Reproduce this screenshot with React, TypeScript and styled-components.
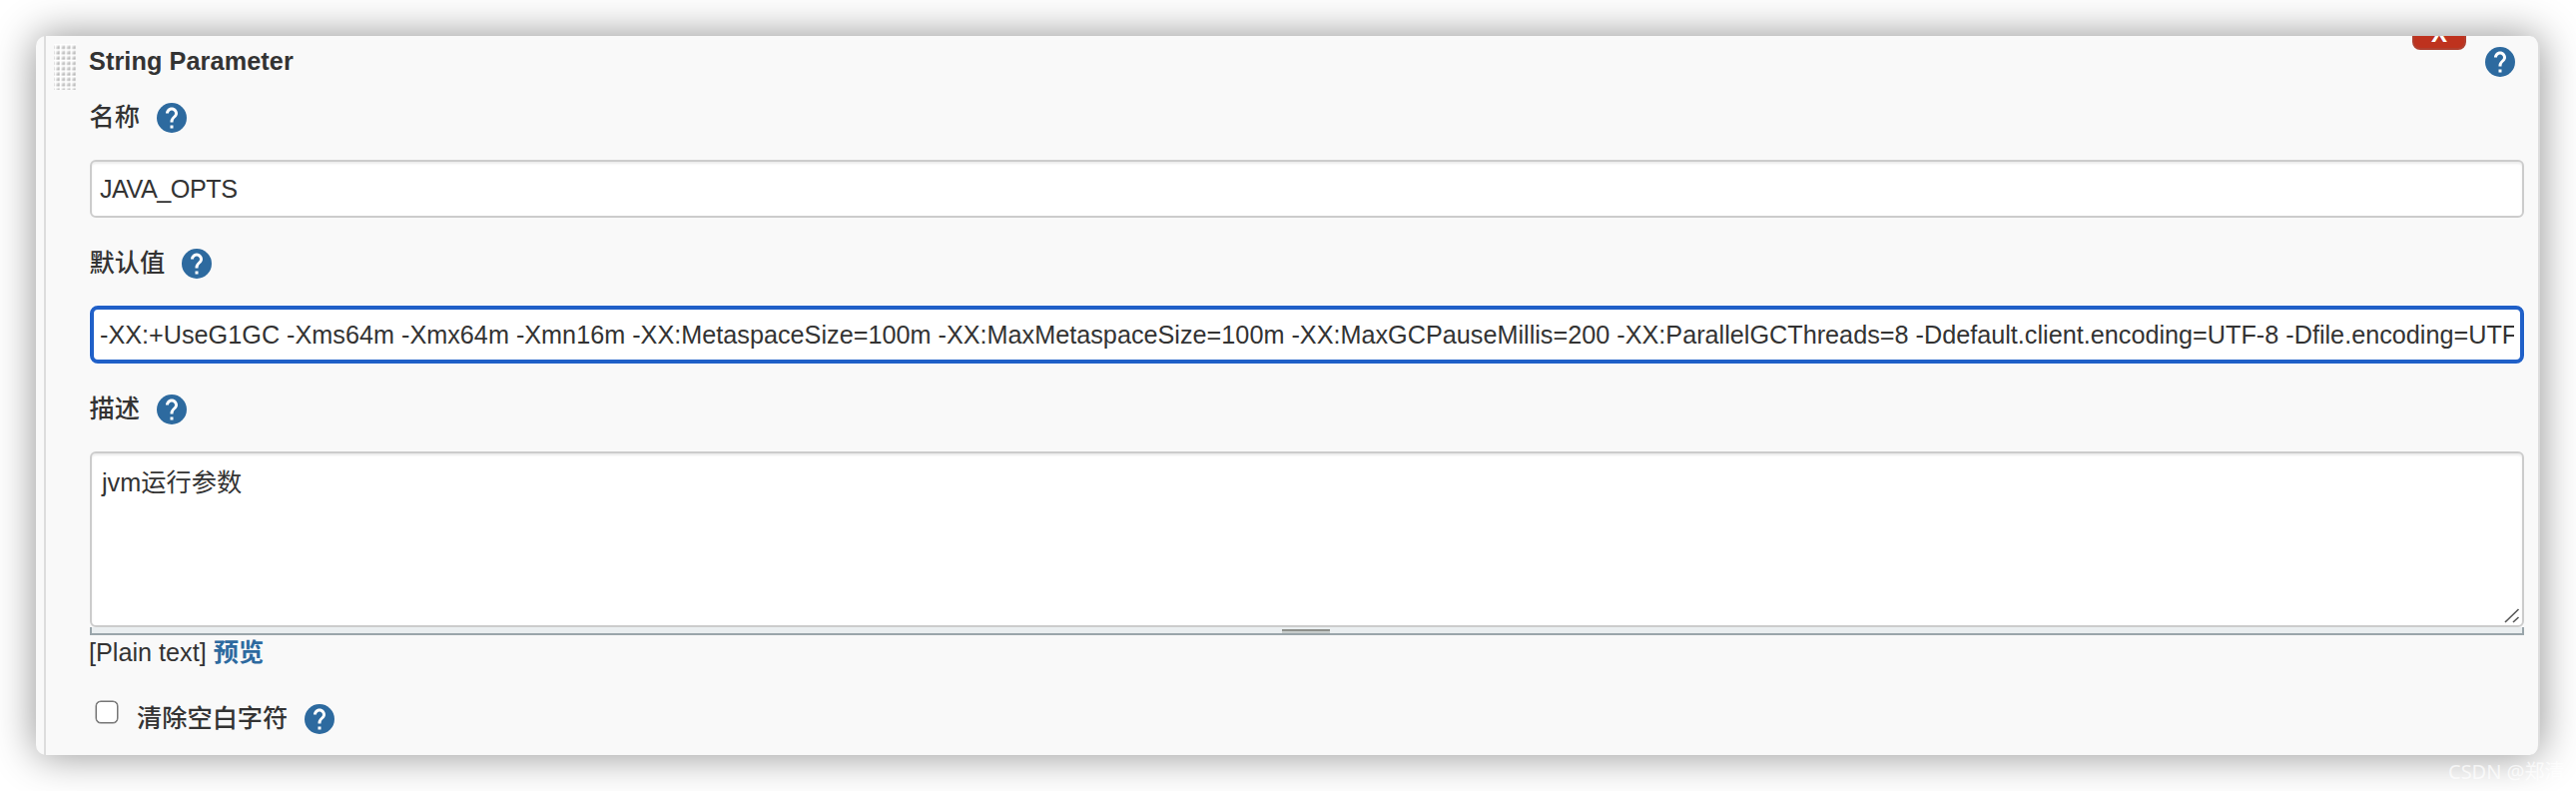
import React from "react";
import styled, { createGlobalStyle } from "styled-components";

const GlobalStyle = createGlobalStyle`
  * { box-sizing: border-box; }
  body {
    margin: 0;
    background: #fff;
    overflow: hidden;
    color: #333;
    font: 25.22px/36px "Liberation Sans", "Noto Sans CJK SC", sans-serif;
  }
`;

const Page = styled.main`
  position: relative;
  height: 792px;
  padding: 36px;
  overflow: hidden;
`;

const Panel = styled.section`
  height: 720px;
  padding-left: 8px;
  background: #f9f9f9;
  border-right: 2px solid #ddd;
  border-radius: 10px;
  box-shadow: 0 0 42px rgba(0, 0, 0, 0.44);
`;

const Body = styled.div`
  position: relative;
  display: flex;
  height: 100%;
  padding: 8px 14px 0 8px;
  border-left: 2px solid #ddd;
  overflow: hidden;
`;

const Grip = styled.svg`
  flex: none;
  width: 22px;
  height: 46px;
  margin-right: 14px;
`;

const Form = styled.div`
  flex: 1;
  min-width: 0;
  display: flex;
  flex-direction: column;
`;

const Header = styled.header`
  display: flex;
  justify-content: space-between;
  height: 36px;
  padding-right: 6px;
  font-weight: 700;
`;

const Title = styled.span`
  margin-left: -1px;
  line-height: 34px;
  letter-spacing: 0.1px;
`;

const Row = styled.div<{ $top: number; $gap?: number }>`
  display: flex;
  align-items: center;
  gap: ${(p) => p.$gap ?? 14}px;
  height: 36px;
  margin-top: ${(p) => p.$top}px;
`;

const Icon = styled.svg`
  flex: none;
  display: block;
  width: 36px;
  height: 36px;
  fill: #2d6a9f;
`;

const Label = styled.label<{ $indent?: boolean }>`
  margin-left: ${(p) => (p.$indent ? 5 : -0.5)}px;
  padding-bottom: 1px;
  font-weight: 500;
  line-height: 35px;
`;

const Field = styled.div<{ $focused?: boolean }>`
  height: 58px;
  margin-top: 24px;
  padding: ${(p) => (p.$focused ? "7px 6px" : "9px 8px")};
  background: #fff;
  border: ${(p) => (p.$focused ? "4px solid #2060c8" : "2px solid #ccc")};
  border-radius: ${(p) => (p.$focused ? 8 : 6)}px;
  box-shadow: ${(p) => (p.$focused ? "0 0 0 1px #fff" : "inset 0 2px 2px rgba(0, 0, 0, 0.075)")};
`;

const Value = styled.div<{ $spacing?: number }>`
  overflow: hidden;
  white-space: nowrap;
  letter-spacing: ${(p) => (p.$spacing ? `${p.$spacing}px` : "normal")};
`;

const Area = styled.div`
  display: flex;
  justify-content: space-between;
  height: 176px;
  margin-top: 24px;
  padding: 11px 2px 0 10px;
  background: #fff;
  border: 2px solid #ccc;
  border-radius: 6px;
  box-shadow: inset 0 2px 2px rgba(0, 0, 0, 0.075);
`;

const Resizer = styled.svg`
  align-self: flex-end;
  width: 16px;
  height: 18px;
`;

const HandleBar = styled.div`
  display: flex;
  justify-content: center;
  height: 8px;
  padding-top: 2px;
  background: #eaeef0;
  border: 2px solid #9aa5aa;
  border-top: 0;
`;

const Handle = styled.div`
  width: 48px;
  height: 4px;
  margin-right: 2px;
  background: #c6cccb;
  border-top: 2px solid #8f918d;
`;

const Note = styled.div`
  height: 36px;
  margin-left: -1px;
  line-height: 35px;
  margin-right: 1px;
  white-space: pre;
`;

const Link = styled.a`
  color: #2d6a9f;
  font-weight: 700;
`;

const Check = styled.span`
  align-self: flex-start;
  width: 22px;
  height: 22px;
  margin-left: 6px;
  background: #fff;
  border: 1.5px solid #767676;
  box-shadow: 0 0 0 0.5px #767676;
  border-radius: 5px;
`;

const Remove = styled.button`
  position: absolute;
  top: -30px;
  right: 72px;
  width: 54px;
  height: 44px;
  padding: 12px 0 0;
  background: #be321e;
  border: 2px solid #b04030;
  border-radius: 8px;
  color: #fff;
  font: 700 24px/28px "Liberation Sans", sans-serif;
`;

const Watermark = styled.div`
  position: absolute;
  left: 2452px;
  top: 760px;
  color: rgba(255, 255, 255, 0.7);
  font: 20px/26px "Noto Sans", "Noto Sans CJK SC", sans-serif;
  white-space: nowrap;
`;

const Help = () => (
  <Icon viewBox="0 0 24 24">
    <circle cx="12" cy="12" r="10" />
    <path
      fill="#fff"
      d="M13 19h-2v-2h2v2zm2.07-7.75l-.9.92C13.45 12.9 13 13.5 13 15h-2v-.5c0-1.1.45-2.1 1.17-2.83l1.24-1.26c.37-.36.59-.86.59-1.41 0-1.1-.9-2-2-2s-2 .9-2 2H8c0-2.21 1.79-4 4-4s4 1.79 4 4c0 .88-.36 1.68-.93 2.25z"
    />
  </Icon>
);

const OPTIONS =
  "-XX:+UseG1GC -Xms64m -Xmx64m -Xmn16m -XX:MetaspaceSize=100m -XX:MaxMetaspaceSize=100m -XX:MaxGCPauseMillis=200 -XX:ParallelGCThreads=8 -Ddefault.client.encoding=UTF-8 -Dfile.encoding=UTF-8";

export default function App() {
  return (
    <Page>
      <GlobalStyle />
      <Panel>
        <Body>
          <Grip viewBox="0 0 22 46">
            <defs>
              <linearGradient id="dot" x1="0" y1="0" x2="1" y2="1">
                <stop offset="0.2" stopColor="#eee" />
                <stop offset="1" stopColor="#999" />
              </linearGradient>
              <pattern id="dots" x="0.7" width="5.33" height="5.33" patternUnits="userSpaceOnUse">
                <rect width="5.33" height="5.33" fill="#fff" />
                <rect x="1.33" y="1.33" width="3.6" height="3.6" fill="url(#dot)" />
              </pattern>
            </defs>
            <rect width="22" height="46" fill="url(#dots)" />
          </Grip>
          <Form>
            <Header>
              <Title>String Parameter</Title>
              <Help />
            </Header>
            <Row $top={20}>
              <Label>名称</Label>
              <Help />
            </Row>
            <Field>
              <Value $spacing={-0.5}>JAVA_OPTS</Value>
            </Field>
            <Row $top={28}>
              <Label>默认值</Label>
              <Help />
            </Row>
            <Field $focused>
              <Value>{OPTIONS}</Value>
            </Field>
            <Row $top={28}>
              <Label>描述</Label>
              <Help />
            </Row>
            <Area>
              <span>jvm运行参数</span>
              <Resizer viewBox="0 0 16 18">
                <path d="M1 15L14.500 2M9 15L14.500 10" stroke="#555" strokeWidth="1.6" />
              </Resizer>
            </Area>
            <HandleBar>
              <Handle />
            </HandleBar>
            <Note>
              [Plain text] <Link>预览</Link>
            </Note>
            <Row $top={30}>
              <Check />
              <Label $indent>清除空白字符</Label>
              <Help />
            </Row>
          </Form>
          <Remove>X</Remove>
        </Body>
      </Panel>
      <Watermark>CSDN @郑清</Watermark>
    </Page>
  );
}
